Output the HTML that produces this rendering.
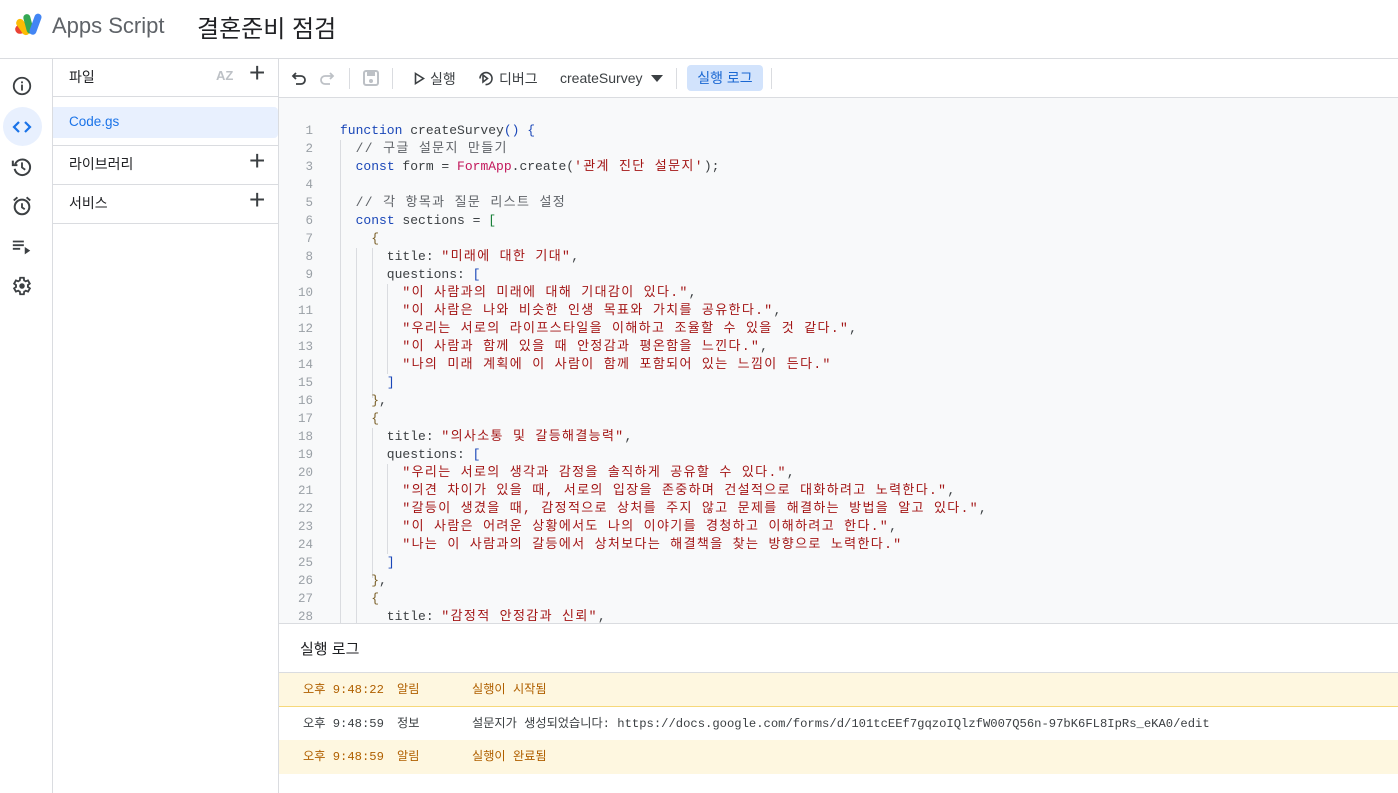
<!DOCTYPE html>
<html><head><meta charset="utf-8"><style>
*{margin:0;padding:0;box-sizing:border-box}
body{width:1398px;height:793px;overflow:hidden;background:#fff;font-family:"Liberation Sans","Noto Sans CJK KR",sans-serif;color:#3c4043;position:relative}
.abs{position:absolute}
.hdr{left:0;top:0;width:1398px;height:59px;border-bottom:1px solid #dadce0}
.rail{left:0;top:59px;width:53px;height:734px;border-right:1px solid #dadce0}
.files{left:53px;top:59px;width:226px;height:734px;border-right:1px solid #dadce0}
.tb{left:279px;top:59px;width:1119px;height:39px;border-bottom:1px solid #dadce0}
.ed{left:279px;top:98px;width:1119px;height:525px;background:#f8f9fa;overflow:hidden}
.code{position:absolute;left:0;top:122px;font-family:"Liberation Mono","Noto Sans CJK KR",monospace;font-size:13px;line-height:18px;white-space:pre}
.ln{position:absolute;left:279px;width:34px;text-align:right;color:#9aa0a6;font-family:"Liberation Mono",monospace;font-size:12.5px;line-height:18px}
.k{color:#1a47b8}.s{color:#a31515;letter-spacing:1.35px}.c{color:#5f6368;letter-spacing:1.35px}.f{color:#c2185b}.p{color:#1a47b8}.g{color:#188038}
.plus{font-size:28px;font-weight:300;color:#3c4043}
.log{left:279px;top:623px;width:1119px;height:170px;border-top:1px solid #dadce0;background:#fff}
.row{position:absolute;left:0;width:1119px;height:34px;font-size:12.2px;line-height:34px;font-family:"Liberation Mono","Noto Sans CJK KR",monospace}
.row span{position:absolute}
.y{background:#fef7e0;color:#b06000}
.guide{position:absolute;width:1px;background:#dadce0}
</style></head><body>
<div class="abs hdr">
 <svg class="abs" style="left:13px;top:12px" width="34" height="28" viewBox="0 0 34 28">
  <rect x="2" y="12" width="18" height="9" rx="4.5" transform="rotate(-10 11 16)" fill="#ea4335"/>
  <rect x="6" y="6" width="8" height="18" rx="4" transform="rotate(-35 10 15)" fill="#fbbc04"/>
  <rect x="12" y="2" width="7" height="20" rx="3.5" transform="rotate(-15 15 12)" fill="#34a853"/>
  <rect x="19" y="1" width="7" height="22" rx="3.5" transform="rotate(20 22 12)" fill="#4285f4"/>
 </svg>
 <div class="abs" style="left:52px;top:13px;font-size:22px;color:#5f6368">Apps Script</div>
 <div class="abs" style="left:197px;top:9px;font-size:24px;color:#202124">결혼준비 점검</div>
</div>
<div class="abs rail">
 <svg class="abs" style="left:11px;top:16px" width="22" height="22" viewBox="0 0 24 24"><circle cx="12" cy="12" r="9" fill="none" stroke="#3c4043" stroke-width="2"/><rect x="11" y="10.5" width="2" height="6.5" fill="#3c4043"/><rect x="11" y="7" width="2" height="2" fill="#3c4043"/></svg>
 <div class="abs" style="left:3px;top:48px;width:39px;height:39px;border-radius:50%;background:#e8f0fe"></div>
 <svg class="abs" style="left:12px;top:58px" width="20" height="20" viewBox="0 0 20 20"><path d="M7 5 L2 10 L7 15 M13 5 L18 10 L13 15" fill="none" stroke="#1a73e8" stroke-width="2.2"/></svg>
 <svg class="abs" style="left:11px;top:97px" width="22" height="22" viewBox="0 0 24 24"><path d="M4.5 9 A8.5 8.5 0 1 1 4 14" fill="none" stroke="#3c4043" stroke-width="2.2"/><path d="M2 5 L2 10 L7 10" fill="none" stroke="#3c4043" stroke-width="2.2"/><path d="M12 7 V12.5 L15.5 15" fill="none" stroke="#3c4043" stroke-width="2"/></svg>
 <svg class="abs" style="left:11px;top:136px" width="22" height="22" viewBox="0 0 24 24"><circle cx="12" cy="13" r="8" fill="none" stroke="#3c4043" stroke-width="2.2"/><path d="M12 9 V13.5 L15 15.5 M3 6 L7 2.5 M21 6 L17 2.5" fill="none" stroke="#3c4043" stroke-width="2"/></svg>
 <svg class="abs" style="left:11px;top:177px" width="22" height="22" viewBox="0 0 24 24"><path d="M2 6 H14 M2 10 H14 M2 14 H10" stroke="#3c4043" stroke-width="2"/><path d="M15 12 L21 16 L15 20 Z" fill="#3c4043"/></svg>
 <svg class="abs" style="left:11px;top:216px" width="22" height="22" viewBox="0 0 24 24"><path d="M19.4 13a7.5 7.5 0 0 0 0-2l2.1-1.6-2-3.5-2.5 1a7.6 7.6 0 0 0-1.7-1L15 3h-4l-.4 2.9a7.6 7.6 0 0 0-1.7 1l-2.5-1-2 3.5L6.5 11a7.5 7.5 0 0 0 0 2l-2.1 1.6 2 3.5 2.5-1a7.6 7.6 0 0 0 1.7 1L11 21h4l.4-2.9a7.6 7.6 0 0 0 1.7-1l2.5 1 2-3.5z" transform="translate(-1 0)" fill="none" stroke="#3c4043" stroke-width="2"/><circle cx="12" cy="12" r="3" fill="#3c4043"/></svg>
</div>
<div class="abs files">
 <div class="abs" style="left:16px;top:8px;font-size:14px;color:#202124">파일</div>
 <div class="abs" style="left:163px;top:9px;font-size:13px;font-weight:bold;color:#bdc1c6">AZ</div>
 <div class="abs plus" style="left:196px;top:-2px">+</div>
 <div class="abs" style="left:0;top:37px;width:225px;height:1px;background:#dadce0"></div>
 <div class="abs" style="left:0;top:48px;width:225px;height:31px;background:#e8f0fe;border-radius:0 4px 4px 0"></div>
 <div class="abs" style="left:16px;top:55px;font-size:13.5px;color:#1a73e8">Code.gs</div>
 <div class="abs" style="left:0;top:86px;width:225px;height:1px;background:#dadce0"></div>
 <div class="abs" style="left:16px;top:95px;font-size:14px;color:#202124">라이브러리</div>
 <div class="abs plus" style="left:196px;top:86px">+</div>
 <div class="abs" style="left:0;top:125px;width:225px;height:1px;background:#dadce0"></div>
 <div class="abs" style="left:16px;top:134px;font-size:14px;color:#202124">서비스</div>
 <div class="abs plus" style="left:196px;top:125px">+</div>
 <div class="abs" style="left:0;top:164px;width:225px;height:1px;background:#dadce0"></div>
</div>
<div class="abs tb">
 <svg class="abs" style="left:12px;top:11px" width="16" height="16" viewBox="0 0 16 16"><path d="M5 3 L2 6 L5 9 M2 6 H10 A4 4 0 0 1 10 14 H5" fill="none" stroke="#3c4043" stroke-width="1.8"/></svg>
 <svg class="abs" style="left:40px;top:11px" width="16" height="16" viewBox="0 0 16 16"><path d="M11 3 L14 6 L11 9 M14 6 H6 A4 4 0 0 0 6 14 H11" fill="none" stroke="#bdc1c6" stroke-width="1.8"/></svg>
 <div class="abs" style="left:70px;top:9px;width:1px;height:21px;background:#dadce0"></div>
 <svg class="abs" style="left:83px;top:10px" width="18" height="18" viewBox="0 0 18 18"><rect x="2" y="2" width="14" height="14" rx="2" fill="none" stroke="#bdc1c6" stroke-width="2"/><rect x="5" y="3" width="8" height="4" fill="#bdc1c6"/><circle cx="9" cy="12" r="2" fill="#bdc1c6"/></svg>
 <div class="abs" style="left:113px;top:9px;width:1px;height:21px;background:#dadce0"></div>
 <svg class="abs" style="left:135px;top:13px" width="11" height="13" viewBox="0 0 11 13"><path d="M1.5 1.5 L9.5 6.5 L1.5 11.5 Z" fill="none" stroke="#3c4043" stroke-width="1.6"/></svg>
 <div class="abs" style="left:151px;top:10px;font-size:14px">실행</div>
 <svg class="abs" style="left:198px;top:11px" width="17" height="17" viewBox="0 0 17 17"><path d="M3 8.5 A6 6 0 1 1 8.5 14.5" fill="none" stroke="#3c4043" stroke-width="1.6"/><path d="M6 5 L10.5 8.5 L6 12 Z" fill="none" stroke="#3c4043" stroke-width="1.6"/></svg>
 <div class="abs" style="left:220px;top:10px;font-size:14px">디버그</div>
 <div class="abs" style="left:281px;top:11px;font-size:14px;color:#3c4043">createSurvey</div>
 <svg class="abs" style="left:372px;top:16px" width="12" height="7" viewBox="0 0 12 7"><path d="M0 0 H12 L6 7Z" fill="#3c4043"/></svg>
 <div class="abs" style="left:397px;top:9px;width:1px;height:21px;background:#dadce0"></div>
 <div class="abs" style="left:408px;top:6px;width:76px;height:26px;background:#d2e3fc;border-radius:4px;font-size:14px;color:#1967d2;text-align:center;line-height:26px">실행 로그</div>
 <div class="abs" style="left:492px;top:9px;width:1px;height:21px;background:#dadce0"></div>
</div>
<div class="abs ed"></div>
<div class="guide" style="left:340px;top:140px;height:483px"></div>
<div class="guide" style="left:356px;top:248px;height:375px"></div>
<div class="guide" style="left:372px;top:248px;height:150px"></div>
<div class="guide" style="left:372px;top:428px;height:150px"></div>
<div class="guide" style="left:387px;top:284px;height:90px"></div>
<div class="guide" style="left:387px;top:464px;height:90px"></div>
<div class="ln" style="top:122px">1<br>2<br>3<br>4<br>5<br>6<br>7<br>8<br>9<br>10<br>11<br>12<br>13<br>14<br>15<br>16<br>17<br>18<br>19<br>20<br>21<br>22<br>23<br>24<br>25<br>26<br>27<br>28</div>
<div class="code" style="left:340px"><span class="k">function</span> createSurvey<span class="p">()</span> <span class="p">{</span>
  <span class="c">// 구글 설문지 만들기</span>
  <span class="k">const</span> form = <span class="f">FormApp</span>.create(<span class="s">'관계 진단 설문지'</span>);

  <span class="c">// 각 항목과 질문 리스트 설정</span>
  <span class="k">const</span> sections = <span class="g">[</span>
    <span style="color:#795e26">{</span>
      title: <span class="s">"미래에 대한 기대"</span>,
      questions: <span class="p">[</span>
        <span class="s">"이 사람과의 미래에 대해 기대감이 있다."</span>,
        <span class="s">"이 사람은 나와 비슷한 인생 목표와 가치를 공유한다."</span>,
        <span class="s">"우리는 서로의 라이프스타일을 이해하고 조율할 수 있을 것 같다."</span>,
        <span class="s">"이 사람과 함께 있을 때 안정감과 평온함을 느낀다."</span>,
        <span class="s">"나의 미래 계획에 이 사람이 함께 포함되어 있는 느낌이 든다."</span>
      <span class="p">]</span>
    <span style="color:#795e26">}</span>,
    <span style="color:#795e26">{</span>
      title: <span class="s">"의사소통 및 갈등해결능력"</span>,
      questions: <span class="p">[</span>
        <span class="s">"우리는 서로의 생각과 감정을 솔직하게 공유할 수 있다."</span>,
        <span class="s">"의견 차이가 있을 때, 서로의 입장을 존중하며 건설적으로 대화하려고 노력한다."</span>,
        <span class="s">"갈등이 생겼을 때, 감정적으로 상처를 주지 않고 문제를 해결하는 방법을 알고 있다."</span>,
        <span class="s">"이 사람은 어려운 상황에서도 나의 이야기를 경청하고 이해하려고 한다."</span>,
        <span class="s">"나는 이 사람과의 갈등에서 상처보다는 해결책을 찾는 방향으로 노력한다."</span>
      <span class="p">]</span>
    <span style="color:#795e26">}</span>,
    <span style="color:#795e26">{</span>
      title: <span class="s">"감정적 안정감과 신뢰"</span>,</div>
<div class="abs log">
 <div class="abs" style="left:21px;top:14px;font-size:15px;color:#202124">실행 로그</div>
 <div class="abs" style="left:0;top:48px;width:1119px;height:1px;background:#dadce0"></div>
 <div class="row y" style="top:49px;border-bottom:1px solid #f6d87a"><span style="left:24px">오후 9:48:22</span><span style="left:118px">알림</span><span style="left:193px">실행이 시작됨</span></div>
 <div class="row" style="top:83px;color:#3c4043;border-bottom:1px solid #f6d87a"><span style="left:24px">오후 9:48:59</span><span style="left:118px">정보</span><span style="left:193px">설문지가 생성되었습니다: https://docs.google.com/forms/d/101tcEEf7gqzoIQlzfW007Q56n-97bK6FL8IpRs_eKA0/edit</span></div>
 <div class="row y" style="top:116px"><span style="left:24px">오후 9:48:59</span><span style="left:118px">알림</span><span style="left:193px">실행이 완료됨</span></div>
</div>
</body></html>
